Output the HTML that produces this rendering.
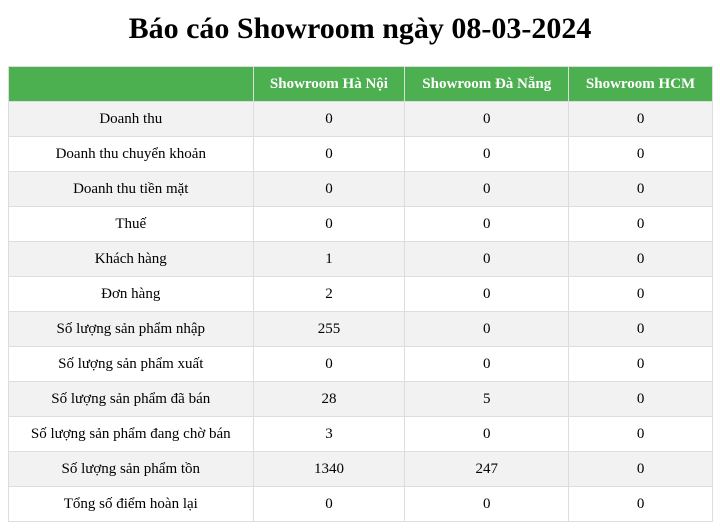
<!DOCTYPE html>
<html><head><meta charset="utf-8"><style>
body{margin:8px;font-family:"Liberation Serif","Noto Serif CJK SC",serif;background:#fff;color:#000}
h1{text-align:center;font-size:30px;margin:11px 0 19px;line-height:36px}
table{width:705px;border-collapse:collapse;font-size:15px}
th,td{border:1px solid #ddd;text-align:center;height:34px;padding:0}
th{background:#4CAF50;color:#fff;font-weight:bold}
tr:nth-child(even) td{background:#f2f2f2}
td{padding-top:1px;height:33px}
</style></head><body>
<h1>Báo cáo Showroom ngày 08-03-2024</h1>
<table>
<colgroup><col style="width:245px"><col style="width:152px"><col style="width:164px"><col style="width:144px"></colgroup>
<tr><th></th><th>Showroom Hà Nội</th><th>Showroom Đà Nẵng</th><th>Showroom HCM</th></tr>
<tr><td>Doanh thu</td><td>0</td><td>0</td><td>0</td></tr>
<tr><td>Doanh thu chuyển khoản</td><td>0</td><td>0</td><td>0</td></tr>
<tr><td>Doanh thu tiền mặt</td><td>0</td><td>0</td><td>0</td></tr>
<tr><td>Thuế</td><td>0</td><td>0</td><td>0</td></tr>
<tr><td>Khách hàng</td><td>1</td><td>0</td><td>0</td></tr>
<tr><td>Đơn hàng</td><td>2</td><td>0</td><td>0</td></tr>
<tr><td>Số lượng sản phẩm nhập</td><td>255</td><td>0</td><td>0</td></tr>
<tr><td>Số lượng sản phẩm xuất</td><td>0</td><td>0</td><td>0</td></tr>
<tr><td>Số lượng sản phẩm đã bán</td><td>28</td><td>5</td><td>0</td></tr>
<tr><td>Số lượng sản phẩm đang chờ bán</td><td>3</td><td>0</td><td>0</td></tr>
<tr><td>Số lượng sản phẩm tồn</td><td>1340</td><td>247</td><td>0</td></tr>
<tr><td>Tổng số điểm hoàn lại</td><td>0</td><td>0</td><td>0</td></tr>
</table>
</body></html>
